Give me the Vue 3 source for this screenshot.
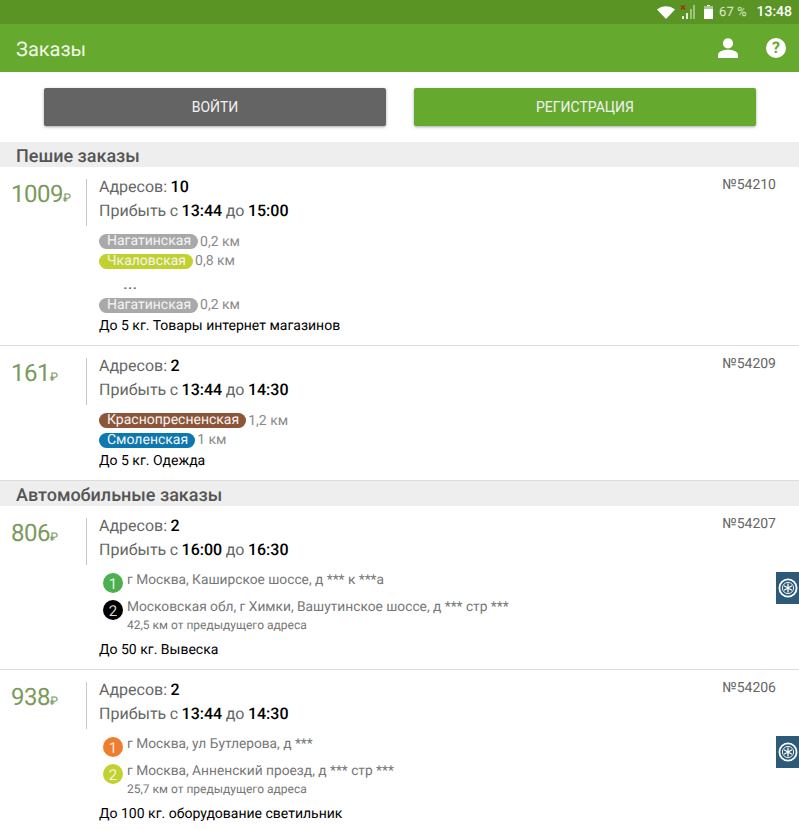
<script setup>
const sections = [
  {
    title: 'Пешие заказы',
    orders: [
      {
        price: 1009, num: 54210, count: 10, from: '13:44', to: '15:00',
        metro: [
          { name: 'Нагатинская', color: '#a9a9a9', dist: '0,2 км' },
          { name: 'Чкаловская', color: '#c1d12f', dist: '0,8 км' },
          { dots: true },
          { name: 'Нагатинская', color: '#a9a9a9', dist: '0,2 км' }
        ],
        note: 'До 5 кг. Товары интернет магазинов'
      },
      {
        price: 161, num: 54209, count: 2, from: '13:44', to: '14:30',
        metro: [
          { name: 'Краснопресненская', color: '#8c5438', dist: '1,2 км' },
          { name: 'Смоленская', color: '#0b78b0', dist: '1 км' }
        ],
        note: 'До 5 кг. Одежда'
      }
    ]
  },
  {
    title: 'Автомобильные заказы',
    orders: [
      {
        price: 806, num: 54207, count: 2, from: '16:00', to: '16:30', side: true,
        stops: [
          { color: '#4caf50', text: 'г Москва, Каширское шоссе, д *** к ***а' },
          { color: '#000000', text: 'Московская обл, г Химки, Вашутинское шоссе, д *** стр ***', dist: '42,5 км от предыдущего адреса' }
        ],
        note: 'До 50 кг. Вывеска'
      },
      {
        price: 938, num: 54206, count: 2, from: '13:44', to: '14:30', side: true,
        stops: [
          { color: '#ef7d2e', text: 'г Москва, ул Бутлерова, д ***' },
          { color: '#c1d12f', text: 'г Москва, Анненский проезд, д *** стр ***', dist: '25,7 км от предыдущего адреса' }
        ],
        note: 'До 100 кг. оборудование светильник'
      }
    ]
  }
]
</script>

<template>
  <div class="screen">
    <div class="status">
      <svg class="wifi" width="18" height="13" viewBox="0 0 18 13">
        <path d="M0 3.5C5 -1 13 -1 18 3.5L9 13Z" fill="#fff" />
      </svg>
      <svg class="signal" width="15" height="14" viewBox="0 0 15 14">
        <rect x="2" y="11" width="2" height="3" fill="#dfeccf" />
        <rect x="6" y="8" width="2" height="6" fill="#dfeccf" />
        <rect x="10" y="4" width="2" height="10" fill="#a3c37c" />
        <rect x="13" y="0" width="2" height="14" fill="#a3c37c" />
        <path d="M1 0.5L5 4.5M5 0.5L1 4.5" stroke="#a5300f" stroke-width="1.4" />
      </svg>
      <svg class="battery" width="9" height="14" viewBox="0 0 9 14">
        <path d="M3 0H6V1H9V14H0V1H3Z" fill="#fff" />
        <rect x="0" y="1" width="9" height="3" fill="#a9c98a" />
      </svg>
      <span class="percent">67 %</span>
      <span class="clock">13:48</span>
    </div>

    <div class="toolbar">
      <span class="title">Заказы</span>
      <svg class="user" width="20" height="20" viewBox="0 0 22 22">
        <circle cx="11" cy="6" r="5.6" fill="#fff" />
        <path d="M0 22V18.5C0 14.5 7 13 11 13S22 14.5 22 18.5V22Z" fill="#fff" />
      </svg>
      <span class="help">?</span>
    </div>

    <div class="actions">
      <button class="btn btn-dark">ВОЙТИ</button>
      <button class="btn btn-green">РЕГИСТРАЦИЯ</button>
    </div>

    <template v-for="section in sections" :key="section.title">
      <div class="section-title">{{ section.title }}</div>
      <div v-for="order in section.orders" :key="order.num" class="order">
        <div class="price"><span>{{ order.price }}</span><small>₽</small></div>
        <div class="body">
          <div class="line">Адресов: <b>{{ order.count }}</b></div>
          <div class="line">Прибыть с <b>{{ order.from }}</b> до <b>{{ order.to }}</b></div>

          <div v-if="order.metro" class="metro-list">
            <template v-for="(m, i) in order.metro" :key="i">
              <div v-if="m.dots" class="dots">...</div>
              <div v-else class="metro">
                <span class="pill" :style="{ background: m.color }">{{ m.name }}</span>
                <span class="dist">{{ m.dist }}</span>
              </div>
            </template>
          </div>

          <div v-if="order.stops" class="stops">
            <div v-for="(s, i) in order.stops" :key="i" class="stop">
              <span class="dot" :style="{ background: s.color }">{{ i + 1 }}</span>
              <div>
                <div class="stop-text">{{ s.text }}</div>
                <div v-if="s.dist" class="stop-dist">{{ s.dist }}</div>
              </div>
            </div>
          </div>

          <div class="note">{{ order.note }}</div>
        </div>
        <div class="num">№{{ order.num }}</div>
        <div v-if="order.side" class="side">
          <svg width="20" height="20" viewBox="0 0 20 20" fill="none" stroke="#fff">
            <circle cx="10" cy="10" r="8.6" stroke-width="1.8" />
            <circle cx="10" cy="10" r="5.6" stroke-width="0.9" />
            <path d="M10 5.5V14.5M6 7.8L14 12.2M14 7.8L6 12.2" stroke-width="1.3" />
          </svg>
        </div>
      </div>
    </template>
  </div>
</template>

<style>
html, body {
  margin: 0;
  background: #fff;
  overflow: hidden;
}
</style>

<style scoped>
.screen {
  height: 830px;
  overflow: hidden;
  font-family: Roboto, "Liberation Sans", sans-serif;
  text-rendering: geometricPrecision;
  color: #000;
  background: #fff;
}

.status {
  height: 24px;
  background: #5a9425;
  display: flex;
  align-items: center;
  justify-content: flex-end;
  color: #fff;
  padding-right: 7px;
}
.wifi { margin-right: 5px; }
.signal { margin-right: 9px; }
.battery { margin-right: 6px; }
.percent { font-size: 13px; color: #dcebc9; margin-right: 10px; }
.clock { font-size: 14px; font-weight: 500; }

.toolbar {
  height: 48px;
  background: #65aa2f;
  display: flex;
  align-items: center;
  color: #fff;
  padding: 0 13px 0 16px;
}
.title { font-size: 20px; flex: 1; color: #f1f8e6; padding-top: 2px; }
.user { margin-right: 28px; }
.help {
  width: 20px;
  height: 20px;
  border-radius: 50%;
  background: #fff;
  color: #65aa2f;
  font-size: 16px;
  font-weight: 700;
  line-height: 20px;
  text-align: center;
}

.actions {
  height: 70px;
  display: flex;
  gap: 28px;
  padding: 16px 43px 0 44px;
  box-sizing: border-box;
}
.btn {
  flex: 1;
  height: 38px;
  border: none;
  border-radius: 2px;
  color: #f2f2f2;
  font-family: inherit;
  font-size: 14px;
  box-shadow: 0 1px 3px rgba(0, 0, 0, 0.35);
}
.btn-dark { background: #646464; }
.btn-green { background: #65aa2f; }

.section-title {
  height: 25px;
  line-height: 30px;
  background: #eeeeee;
  padding-left: 16px;
  color: #555;
  font-size: 18px;
  font-weight: 500;
  overflow: hidden;
}

.order {
  position: relative;
  display: flex;
  padding: 12px 0 10px;
  border-bottom: 1px solid #dcdcdc;
}
.price {
  box-sizing: border-box;
  width: 87px;
  height: 47px;
  padding-left: 11px;
  border-right: 1px solid #c8c8c8;
  color: #7b9a5c;
  font-size: 24px;
  line-height: 30px;
  flex: none;
}
.price span { letter-spacing: -0.5px; }
.price small { font-size: 12px; }

.body {
  flex: 1;
  padding-left: 12px;
  font-size: 16px;
  color: #666;
}
.line { height: 24px; line-height: 16px; word-spacing: -0.5px; }
.line b { color: #000; font-weight: 500; }

.metro-list { padding-top: 5px; }
.metro {
  display: flex;
  align-items: center;
  height: 19.5px;
  font-size: 14px;
}
.pill {
  color: #f4f4f4;
  height: 15px;
  line-height: 15px;
  border-radius: 8px;
  padding: 0 7px 0 8px;
}
.dist { margin-left: 2px; color: #8a8a8a; }
.dots {
  height: 24.5px;
  padding-left: 24px;
  line-height: 26px;
  font-size: 18px;
  color: #666;
}

.stops { padding-top: 4px; }
.stop {
  display: flex;
  margin-bottom: 4px;
  font-size: 13.75px;
}
.dot {
  width: 20px;
  height: 20px;
  border-radius: 50%;
  margin: 3px 4px 0 4px;
  color: rgba(255, 255, 255, 0.85);
  font-size: 15px;
  line-height: 22px;
  text-align: center;
  flex: none;
}
.stop-text { color: #777; line-height: 20px; }
.stop-dist { color: #777; font-size: 12px; line-height: 14px; margin-top: 1px; }

.note {
  height: 20px;
  font-size: 14px;
  color: #000;
  line-height: 22px;
}
.stops + .note { margin-top: 7px; }

.num {
  position: absolute;
  top: 10px;
  right: 23px;
  font-size: 14px;
  color: #666;
}
.side {
  position: absolute;
  top: 66px;
  right: 0;
  width: 23px;
  height: 32px;
  background: #2c5a78;
  display: flex;
  align-items: center;
  justify-content: center;
}
</style>
